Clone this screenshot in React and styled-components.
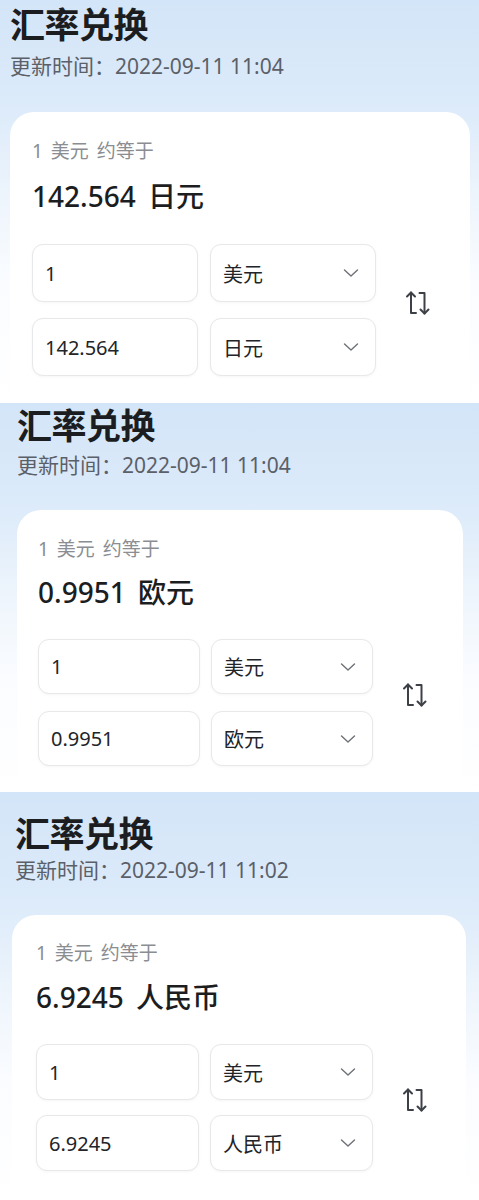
import React from 'react';
import styled, { createGlobalStyle } from 'styled-components';

const GlobalStyle = createGlobalStyle`
  body {
    margin: 0;
    background: #ffffff;
    font-family: "Noto Sans", "Noto Sans CJK SC", sans-serif;
  }
  #root {
    width: 479px;
  }
`;

const Panel = styled.section`
  height: ${(p) => p.cfg.height}px;
  overflow: hidden;
  display: flex;
  flex-direction: column;
  box-sizing: border-box;
  padding-top: ${(p) => p.cfg.padTop}px;
  background: linear-gradient(180deg, #d3e5f8 0%, #ddebfa 28%, #eef5fc 50%, #fafcff 70%, #ffffff 100%);
`;

const Header = styled.header`
  padding-left: ${(p) => p.cfg.padLeft}px;
`;

const Title = styled.h1`
  margin: 0;
  font-size: 35px;
  line-height: 40px;
  font-weight: 700;
  color: #1b1d20;
  letter-spacing: -0.5px;
`;

const Updated = styled.div`
  margin-top: ${(p) => p.cfg.titleGap}px;
  font-size: 21px;
  line-height: 26px;
  color: #5b6068;
`;

const Card = styled.div`
  flex: 1;
  margin: ${(p) => p.cfg.cardGap}px ${(p) => p.cfg.cardRight}px ${(p) => p.cfg.cardBottom}px ${(p) => p.cfg.cardLeft}px;
  padding: ${(p) => p.cfg.cardPadTop}px 0 0 ${(p) => p.cfg.cardPadLeft}px;
  background: #ffffff;
  border-radius: 24px;
`;

const RateLabel = styled.div`
  font-size: 19px;
  line-height: 24px;
  word-spacing: 3px;
  color: #8a8d92;
`;

const RateValue = styled.div`
  margin-top: ${(p) => p.cfg.valueGap}px;
  font-size: 28px;
  line-height: 34px;
  font-weight: 500;
  word-spacing: 5px;
  color: #1c1d1f;
`;

const Converter = styled.div`
  margin-top: ${(p) => p.cfg.rowsGap}px;
  display: flex;
  align-items: center;
`;

const Fields = styled.div`
  display: grid;
  grid-template-columns: ${(p) => p.cfg.fieldW}px ${(p) => p.cfg.fieldW}px;
  grid-auto-rows: ${(p) => p.cfg.fieldH}px;
  column-gap: ${(p) => p.cfg.colGap}px;
  row-gap: ${(p) => p.cfg.rowGap}px;
`;

const Field = styled.div`
  display: flex;
  align-items: center;
  justify-content: space-between;
  box-sizing: border-box;
  padding: 0 16px 0 12px;
  border: 1px solid #e7e8ea;
  border-radius: 11px;
  box-shadow: 0 1px 3px rgba(0, 0, 0, 0.04);
  background: #ffffff;
  font-size: 20px;
  color: #222428;
`;

const Chevron = styled.svg`
  width: 16px;
  height: 10px;
  flex-shrink: 0;
`;

const SwapButton = styled.button`
  margin: 0 0 15px 29px;
  padding: 0;
  border: none;
  background: none;
  width: 26px;
  height: 26px;
  cursor: pointer;
`;

const ChevronIcon = () => (
  <Chevron viewBox="0 0 16 10" fill="none" stroke="#6e7177" strokeWidth="1.4" strokeLinecap="round" strokeLinejoin="round">
    <path d="M1.5 2 L8 8 L14.5 2" />
  </Chevron>
);

const SwapIcon = () => (
  <svg width="26" height="26" viewBox="0 0 26 26" fill="none" stroke="#3d4046" strokeWidth="2" strokeLinecap="round" strokeLinejoin="round">
    <path d="M6 2.5 V23 H11" />
    <path d="M2 6.5 L6 2.5 L10 6.5" />
    <path d="M14.5 3 H19.5 V23.5" />
    <path d="M15.5 19.5 L19.5 23.5 L23.5 19.5" />
  </svg>
);

const panels = [
  {
    time: '2022-09-11 11:04', value: '142.564', target: '日元',
    cfg: {
      height: 403, padTop: 5, padLeft: 10, titleGap: 8, cardGap: 33,
      cardLeft: 10, cardRight: 9, cardBottom: -40, cardPadTop: 27, cardPadLeft: 22,
      valueGap: 16, rowsGap: 31, fieldW: 166, fieldH: 58, colGap: 12, rowGap: 16,
    },
  },
  {
    time: '2022-09-11 11:04', value: '0.9951', target: '欧元',
    cfg: {
      height: 389, padTop: 3, padLeft: 17, titleGap: 6, cardGap: 32,
      cardLeft: 17, cardRight: 16, cardBottom: 3, cardPadTop: 27, cardPadLeft: 21,
      valueGap: 14, rowsGap: 30, fieldW: 162, fieldH: 55, colGap: 11, rowGap: 17,
    },
  },
  {
    time: '2022-09-11 11:02', value: '6.9245', target: '人民币',
    cfg: {
      height: 408, padTop: 22, padLeft: 15, titleGap: 3, cardGap: 32,
      cardLeft: 12, cardRight: 13, cardBottom: 0, cardPadTop: 26, cardPadLeft: 24,
      valueGap: 15, rowsGap: 30, fieldW: 163, fieldH: 56, colGap: 11, rowGap: 15,
    },
  },
];

const ExchangePanel = ({ time, value, target, cfg }) => (
  <Panel cfg={cfg}>
    <Header cfg={cfg}>
      <Title>汇率兑换</Title>
      <Updated cfg={cfg}>更新时间：{time}</Updated>
    </Header>
    <Card cfg={cfg}>
      <RateLabel>1 美元 约等于</RateLabel>
      <RateValue cfg={cfg}>{value} {target}</RateValue>
      <Converter cfg={cfg}>
        <Fields cfg={cfg}>
          <Field>1</Field>
          <Field>美元 <ChevronIcon /></Field>
          <Field>{value}</Field>
          <Field>{target} <ChevronIcon /></Field>
        </Fields>
        <SwapButton type="button" aria-label="swap">
          <SwapIcon />
        </SwapButton>
      </Converter>
    </Card>
  </Panel>
);

const App = () => (
  <>
    <GlobalStyle />
    {panels.map((p) => (
      <ExchangePanel key={p.target} {...p} />
    ))}
  </>
);

export default App;
